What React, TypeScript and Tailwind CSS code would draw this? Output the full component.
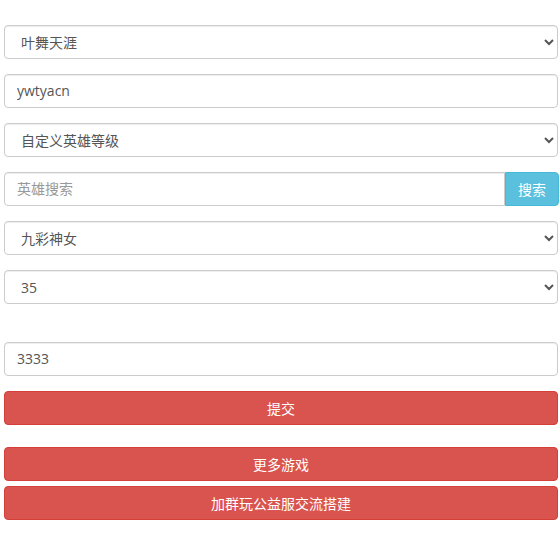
import React from "react";

const font = { fontFamily: '"Open Sans", "Noto Sans CJK SC", sans-serif' };

function Sel({ value }: { value: string }) {
  return (
    <select
      defaultValue={value}
      className="block w-full h-[34px] rounded-[4px] border border-[#ccc] bg-white pl-[12px] pr-[6px] text-[14px] text-[#555] shadow-[inset_0_1px_1px_rgba(0,0,0,0.075)] outline-none"
    >
      <option value={value}>{value}</option>
    </select>
  );
}

function Inp({ value, placeholder, cls = "" }: { value?: string; placeholder?: string; cls?: string }) {
  return (
    <input
      defaultValue={value}
      placeholder={placeholder}
      className={
        "block w-full h-[34px] border border-[#ccc] bg-white px-[12px] pb-[2px] text-[14px] text-[#555] placeholder:text-[#999] shadow-[inset_0_1px_1px_rgba(0,0,0,0.075)] outline-none " +
        cls
      }
    />
  );
}

function RedBtn({ label }: { label: string }) {
  return (
    <button className="block w-full h-[34px] rounded-[4px] border border-[#d43f3a] bg-[#d9534f] text-[14px] text-white">
      {label}
    </button>
  );
}

export default function App() {
  return (
    <div className="bg-white w-[559px] h-[541px] pl-[4px] pr-[1px] pt-[25px]" style={font}>
      <Sel value="叶舞天涯" />
      <div className="mt-[15px]">
        <Inp value="ywtyacn" cls="rounded-[4px]" />
      </div>
      <div className="mt-[15px]">
        <Sel value="自定义英雄等级" />
      </div>
      <div className="mt-[15px] flex">
        <div className="flex-1">
          <Inp placeholder="英雄搜索" cls="rounded-l-[4px]" />
        </div>
        <button className="h-[34px] w-[54px] shrink-0 rounded-r-[4px] border border-[#46b8da] bg-[#5bc0de] text-[14px] text-white -mr-[1px]">
          搜索
        </button>
      </div>
      <div className="mt-[15px]">
        <Sel value="九彩神女" />
      </div>
      <div className="mt-[15px]">
        <Sel value="35" />
      </div>
      <div className="mt-[38px]">
        <Inp value="3333" cls="rounded-[4px]" />
      </div>
      <div className="mt-[15px]">
        <RedBtn label="提交" />
      </div>
      <div className="mt-[22px]">
        <RedBtn label="更多游戏" />
      </div>
      <div className="mt-[5px]">
        <RedBtn label="加群玩公益服交流搭建" />
      </div>
    </div>
  );
}
